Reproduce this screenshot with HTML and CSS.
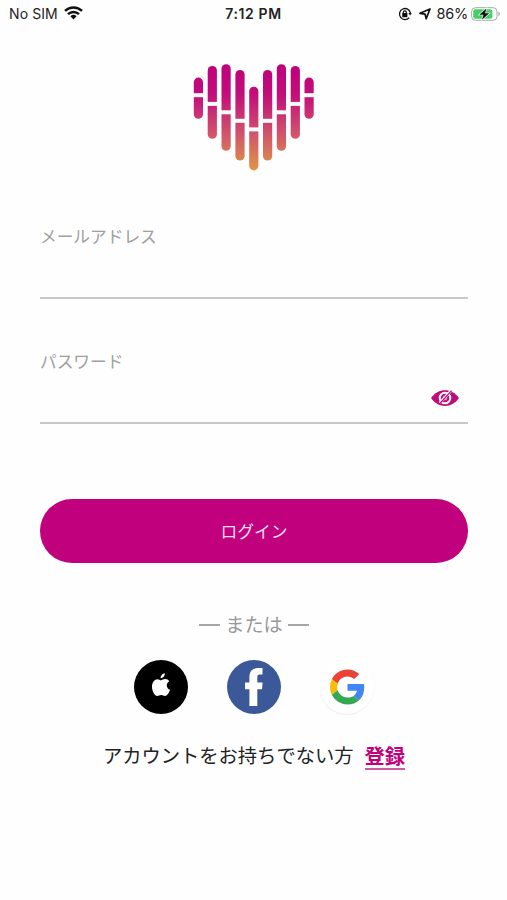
FILE: index.html
```html
<!DOCTYPE html>
<html lang="ja">
<head>
  <meta charset="UTF-8">
  <meta name="viewport" content="width=device-width, initial-scale=1">
  <title>ログイン</title>
  <link rel="stylesheet" href="styles.css">
</head>
<body>
  <div class="status-bar">
    <div class="status-left">
      <span>No SIM</span>
      <svg class="wifi" width="19" height="14" viewBox="0 0 19 14" fill="none" stroke="#111" stroke-width="2.5">
        <path d="M1 4.9a12.2 12.2 0 0 1 17 0"/>
        <path d="M4 8.1a8 8 0 0 1 11 0"/>
        <path d="M6.4 10.3a4.5 4.5 0 0 1 6.2 0L9.5 13.6z" fill="#111" stroke="none"/>
      </svg>
    </div>
    <div class="status-time">7:12 PM</div>
    <div class="status-right">
      <svg width="14" height="14" viewBox="0 0 14 14" fill="none" stroke="#111">
        <path d="M11.2 10.6A5.5 5.5 0 1 1 12.4 6" stroke-width="1.3"/>
        <path d="M10.4 6h3.4l-1.7 2.4z" fill="#111" stroke="none"/>
        <rect x="4.2" y="6" width="5.2" height="4.2" rx=".6" fill="#111" stroke="none"/>
        <path d="M5.3 6.4V5.3a1.5 1.5 0 0 1 3 0v1.1" stroke-width="1.2"/>
      </svg>
      <svg class="location" width="12" height="12" viewBox="0 0 12 12" fill="none" stroke="#111" stroke-width="1.7" stroke-linejoin="round">
        <path d="M11 1L7.2 10.8 6.1 6.1 1 5.3z"/>
      </svg>
      <span class="percent">86%</span>
      <svg class="battery" width="30" height="14" viewBox="0 0 30 14">
        <rect x=".6" y=".7" width="25.4" height="12.6" rx="3.8" fill="#fff" stroke="#a5aba7"/>
        <rect x="2.2" y="2.3" width="19.2" height="9.4" rx="2.2" fill="#46cf68"/>
        <path d="M27.4 4.8c2 .6 2 3.8 0 4.4z" fill="#a5aba7"/>
        <path d="M15.4 1.4L8.3 7.7h4.1l-1.4 5 7.2-6.4h-4.1z" fill="#111" stroke="#fff" stroke-width="1.2" paint-order="stroke"/>
      </svg>
    </div>
  </div>

  <div class="container">
    <svg class="logo" width="140" height="124" viewBox="0 0 140 124">
      <defs>
        <linearGradient id="heart" gradientUnits="userSpaceOnUse" x1="0" y1="8" x2="0" y2="115">
          <stop offset="0" stop-color="#bf007c"/>
          <stop offset=".28" stop-color="#c20d7b"/>
          <stop offset=".65" stop-color="#d1536b"/>
          <stop offset="1" stop-color="#df9846"/>
        </linearGradient>
      </defs>
      <g stroke="url(#heart)" stroke-width="9.2" stroke-linecap="round">
        <path d="M14.4 26.2V58.2"/>
        <path d="M28.3 14.6V78.2"/>
        <path d="M42.1 12.8V90.2"/>
        <path d="M56 18.6V100"/>
        <path d="M69.8 35.3V109.8"/>
        <path d="M83.6 18.6V100"/>
        <path d="M97.4 12.8V90.2"/>
        <path d="M111.3 14.6V78.2"/>
        <path d="M125.1 26.2V58.2"/>
      </g>
      <!-- gaps across the bars -->
      <g fill="#fefefe">
        <rect x="8" y="37.2" width="13" height="4"/>
        <rect x="22" y="45.9" width="13" height="4"/>
        <rect x="36" y="54.3" width="13" height="4"/>
        <rect x="50" y="62.8" width="13" height="4"/>
        <rect x="63" y="71.4" width="13" height="4"/>
        <rect x="77" y="62.8" width="13" height="4"/>
        <rect x="91" y="54.3" width="13" height="4"/>
        <rect x="105" y="45.9" width="13" height="4"/>
        <rect x="119" y="37.2" width="13" height="4"/>
      </g>
    </svg>

    <form>
      <div class="field">
        <label for="email">メールアドレス</label>
        <input type="email" id="email" name="email">
      </div>

      <div class="field">
        <label for="password">パスワード</label>
        <div class="password-row">
          <input type="password" id="password" name="password">
          <svg class="eye" width="28" height="18" viewBox="0 0 28 18">
            <path d="M0 9C7-1.5 21-1.5 28 9 21 19.5 7 19.5 0 9z" fill="#bd0c7c"/>
            <circle cx="14" cy="9" r="5.3" fill="none" stroke="#fff" stroke-width="2"/>
            <circle cx="14" cy="9" r="1.8" fill="none" stroke="#f3cbe2" stroke-width="1"/>
            <path d="M8.6 14.2L19.8 2" stroke="#fff" stroke-width="2.6"/>
            <path d="M8 15.5L20.6 1.6" stroke="#bd0c7c" stroke-width="1.3"/>
          </svg>
        </div>
      </div>

      <button type="submit">ログイン</button>
    </form>

    <div class="divider"><span class="dash"></span>または<span class="dash"></span></div>

    <div class="social">
      <a class="social-btn apple">
        <svg width="20" height="26" viewBox="0 0 20 26" fill="#fff">
          <path d="M13.8 1.3c.2 2.6-1.8 4.8-4.2 5C9.4 3.8 11.5 1.7 13.8 1.3z"/>
          <path d="M10 8.3c1.1 0 2.2-1.2 4.2-1.2 1.8 0 3.2.9 4 2.1-3.6 2.2-3 7.2.8 8.6-.7 2.2-2.6 6.2-4.9 6.2-1.5 0-2-.9-3.9-.9s-2.500.9-3.900.9C3.600 24 1 19.200 1 14.800 1 10.100 3.700 7.200 6.500 7.200c1.500 0 2.500 1.100 3.500 1.100z"/>
        </svg>
      </a>
      <a class="social-btn facebook">
        <svg width="18" height="38" viewBox="0 0 18 38" fill="#fff">
          <path d="M4.4 38V21.2H0v-6.8h4.4V9.2C4.4 3.2 7.6 0 13 0h4.5v6.5h-2.7c-1.9 0-2.5.9-2.5 2.8v5.1h5.300l-.6 6.800h-4.700V38z"/>
        </svg>
      </a>
      <a class="social-btn google">
        <svg width="35" height="36" viewBox="0 0 48 48">
          <path fill="#ea4335" d="M24 9.5c3.54 0 6.71 1.22 9.21 3.6l6.85-6.85C35.9 2.38 30.47 0 24 0 14.62 0 6.51 5.38 2.56 13.22l7.98 6.19C12.43 13.72 17.74 9.5 24 9.5z"/>
          <path fill="#4285f4" d="M46.98 24.55c0-1.57-.15-3.09-.38-4.55H24v9.02h12.94c-.58 2.96-2.26 5.48-4.78 7.18l7.73 6c4.51-4.18 7.09-10.36 7.09-17.65z"/>
          <path fill="#fbbc05" d="M10.53 28.59A14.5 14.5 0 0 1 9.77 24c0-1.6.27-3.14.76-4.59l-7.98-6.19A23.9 23.9 0 0 0 0 24c0 3.88.92 7.54 2.56 10.78z"/>
          <path fill="#34a853" d="M24 48c6.48 0 11.93-2.13 15.89-5.81l-7.73-6C30.01 37.64 27.24 38.49 24 38.49c-6.26 0-11.57-4.22-13.47-9.91l-7.98 6.19C6.51 42.62 14.62 48 24 48z"/>
        </svg>
      </a>
    </div>

    <div class="signup">
      <span>アカウントをお持ちでない方</span>
      <a class="signup-link">登録</a>
    </div>
  </div>
</body>
</html>
```

FILE: styles.css
```css
* {
  box-sizing: border-box;
}

body {
  margin: 0;
  background: #fefefe;
  font-family: "Noto Sans CJK JP", sans-serif;
  color: #222;
}

.status-bar {
  display: grid;
  grid-template-columns: 1fr auto 1fr;
  align-items: center;
  height: 28px;
  padding: 0 6px 0 9px;
  font-family: Inter, sans-serif;
  font-size: 14px;
  line-height: 28px;
}

.status-left,
.status-right {
  display: flex;
  align-items: center;
}

.status-left {
  gap: 6px;
  letter-spacing: 0.1px;
}

.status-right {
  justify-content: flex-end;
}

.status-time {
  padding-right: 3px;
  font-weight: 600;
  letter-spacing: 0.6px;
}

.wifi {
  margin-top: -2px;
}

.location {
  margin: 0 5px 0 7px;
}

.percent {
  font-size: 14.5px;
  letter-spacing: -0.2px;
}

.battery {
  margin-left: 3px;
}

.container {
  display: flex;
  flex-direction: column;
  align-items: center;
  padding: 28px 39px 0 40px;
}

.logo {
  display: block;
}

form {
  width: 100%;
  margin-top: 43px;
}

.field {
  height: 76px;
  margin-bottom: 49px;
  border-bottom: 2px solid #c8c8c8;
}

label {
  display: block;
  height: 26px;
  font-size: 16.7px;
  line-height: 26px;
  color: #a0a0a0;
}

input {
  display: block;
  width: 100%;
  height: 46px;
  padding: 0;
  border: none;
  outline: none;
  background: transparent;
  font-size: 17px;
}

.password-row {
  display: flex;
  align-items: center;
  height: 48px;
  padding-right: 9px;
}

.password-row input {
  flex: 1;
  min-width: 0;
}

button {
  display: block;
  width: 100%;
  height: 64px;
  margin-top: 75px;
  padding: 0;
  border: none;
  border-radius: 32px;
  background: #c0007c;
  color: #fbdcf0;
  font-family: inherit;
  font-size: 16.8px;
  line-height: 64px;
}

.divider {
  display: flex;
  align-items: center;
  gap: 5px;
  margin-top: 46px;
  font-size: 19.2px;
  line-height: 30px;
  color: #999;
}

.dash {
  width: 21px;
  height: 2px;
  margin-top: 2px;
  background: #a6a6a6;
}

.social {
  display: flex;
  gap: 39px;
  margin-top: 21px;
}

.social-btn {
  display: flex;
  align-items: center;
  justify-content: center;
  width: 54px;
  height: 54px;
  border-radius: 50%;
}

.apple {
  padding-bottom: 5px;
  background: #000;
}

.facebook {
  background: #3b5998;
}

.google {
  background: #fff;
  box-shadow: 0 1px 1px rgba(0, 0, 0, 0.07);
}

.signup {
  display: flex;
  align-items: flex-start;
  gap: 11px;
  margin-top: 27px;
  font-size: 19.3px;
  line-height: 28px;
}

.signup-link {
  height: 29px;
  border-bottom: 2px solid #cd5ca0;
  font-size: 20.3px;
  font-weight: bold;
  color: #c0007c;
}
```
